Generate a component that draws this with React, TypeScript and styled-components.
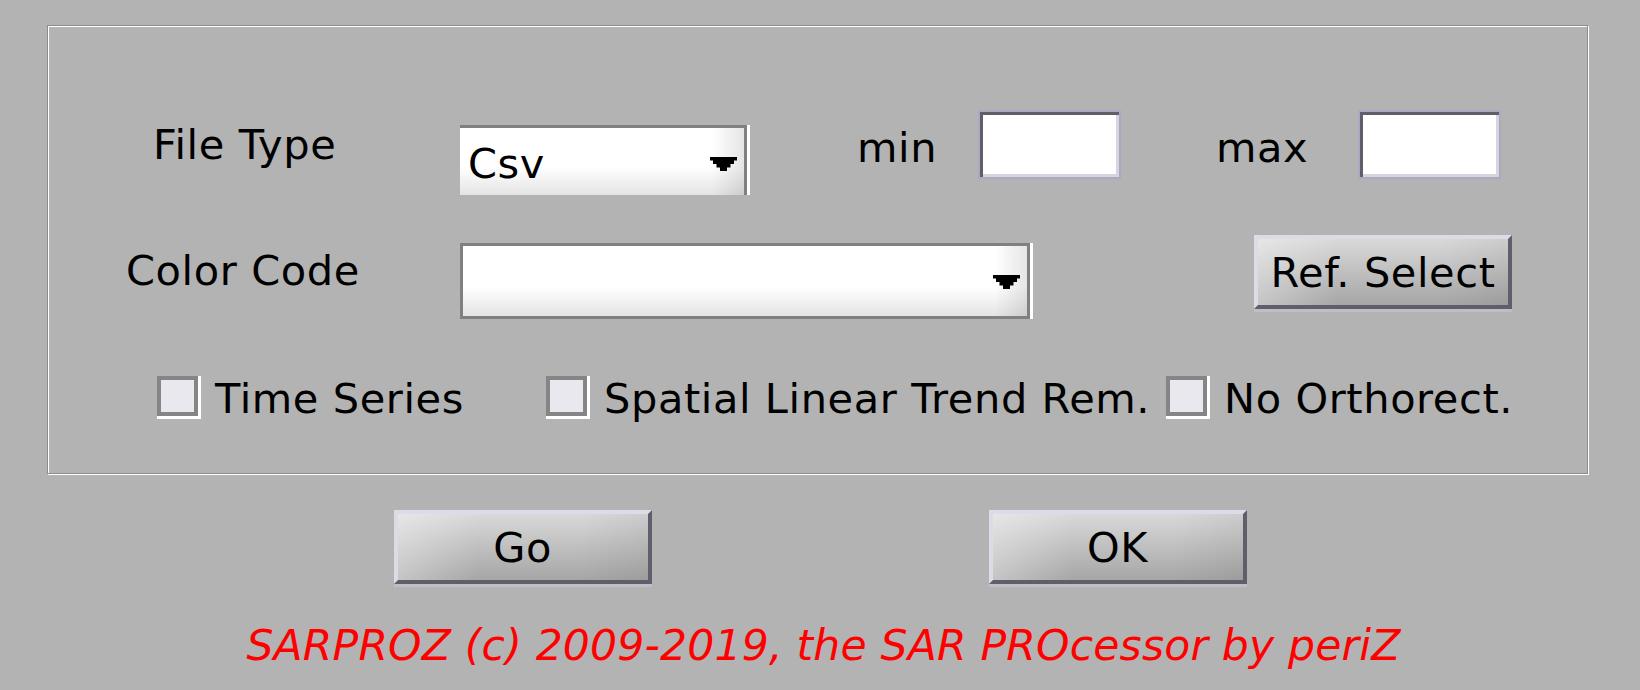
import React from 'react'
import styled, { createGlobalStyle } from 'styled-components'

const GlobalStyle = createGlobalStyle`
  html, body {
    margin: 0;
    padding: 0;
    background: #b3b3b3;
  }
  body {
    font-family: "DejaVu Sans", "Liberation Sans", sans-serif;
    color: #000;
  }
`

const Dialog = styled.div`
  width: 1640px;
  height: 690px;
  padding-top: 25px;
  box-sizing: border-box;
  display: flex;
  flex-direction: column;
  font-size: 41.5px;
  line-height: 1;
  letter-spacing: 0.6px;
`

const Panel = styled.div`
  box-sizing: border-box;
  margin-left: 47px;
  width: 1541px;
  height: 449px;
  padding-top: 84px;
  border: 1px solid #8c8c8c;
  box-shadow: inset 1px 1px 0 #fff, 1px 1px 0 #fff;
  display: flex;
  flex-direction: column;
`

const Row = styled.div<{ $indent: number; $height?: number; $gap?: number }>`
  display: flex;
  align-items: flex-start;
  padding-left: ${(p) => p.$indent}px;
  height: ${(p) => (p.$height ? `${p.$height}px` : 'auto')};
  margin-top: ${(p) => p.$gap ?? 0}px;
`

const Label = styled.div<{ $width: number; $top: number; $left?: number }>`
  flex: none;
  width: ${(p) => p.$width}px;
  margin-top: ${(p) => p.$top}px;
  margin-left: ${(p) => p.$left ?? 0}px;
  white-space: nowrap;
`

const Combo = styled.div<{ $width: number; $height: number; $top: number; $boxed?: boolean }>`
  flex: none;
  box-sizing: border-box;
  display: flex;
  align-items: flex-start;
  width: ${(p) => p.$width}px;
  height: ${(p) => p.$height}px;
  margin-top: ${(p) => p.$top}px;
  padding-left: 8px;
  border-top: 3px solid #808080;
  border-right: 3px solid #808080;
  ${(p) => p.$boxed && 'border-left: 3px solid #808080; border-bottom: 3px solid #808080;'}
  box-shadow: 3px 0 0 #fff;
  background:
    linear-gradient(to right, rgba(0, 0, 0, 0) calc(100% - 32px), rgba(0, 0, 0, 0.1)),
    linear-gradient(to bottom, #fff 58%, #e4e4e4);
`

const ComboValue = styled.span`
  margin-top: 15px;
  white-space: nowrap;
`

const Arrow = styled.svg`
  flex: none;
  margin-left: auto;
  margin-right: 7px;
  margin-top: 29px;
`

const Field = styled.div`
  flex: none;
  box-sizing: border-box;
  width: 143px;
  height: 69px;
  border: 2px solid #a9a9bf;
  background: #fff;
  box-shadow: inset 3px 3px 0 #5f5f69, inset -3px -3px 0 #d5d5df;
`

const Button = styled.div<{ $width: number; $left?: number }>`
  flex: none;
  box-sizing: border-box;
  width: ${(p) => p.$width}px;
  height: 74px;
  margin-left: ${(p) => p.$left ?? 0}px;
  padding-top: 2px;
  border: 4px solid;
  border-color: #dcdce6 #5f5f6b #5f5f6b #dcdce6;
  box-shadow: 0 3px 0 #bebec4;
  background:
    linear-gradient(to right, rgba(255, 255, 255, 0.35), rgba(255, 255, 255, 0) 80px),
    linear-gradient(to left, rgba(0, 0, 0, 0.06), rgba(0, 0, 0, 0) 70px),
    linear-gradient(to bottom, #d9d9d9, #a6a6a6);
  display: flex;
  align-items: center;
  justify-content: center;
  white-space: nowrap;
`

const CheckItem = styled.div<{ $width?: number }>`
  flex: none;
  display: flex;
  align-items: flex-start;
  width: ${(p) => (p.$width ? `${p.$width}px` : 'auto')};
`

const Check = styled.span`
  flex: none;
  box-sizing: border-box;
  width: 41px;
  height: 40px;
  border: 4px solid #858585;
  background: #e9e8ee;
  box-shadow: 3px 0 0 #fff, 0 3px 0 #fff, 3px 3px 0 #fff;
`

const CheckText = styled.span`
  margin-left: 17px;
  margin-top: 2px;
  white-space: nowrap;
`

const ButtonRow = styled.div`
  display: flex;
  justify-content: center;
  gap: 337px;
  margin-top: 36px;
`

const Footer = styled.div`
  margin-top: 41px;
  padding-left: 7px;
  text-align: center;
  font-size: 42.5px;
  letter-spacing: 0.2px;
  font-style: italic;
  color: #ff0000;
  white-space: nowrap;
`

const DropArrow = () => (
  <Arrow width="27" height="14" viewBox="0 0 27 14">
    <path d="M0 0H27V3.5H24V7H20.5V10.5H17V14H10V10.5H6.5V7H3V3.5H0Z" fill="#000" />
  </Arrow>
)

const App = () => {
  return (
    <Dialog>
      <GlobalStyle />
      <Panel>
        <Row $indent={105} $height={85}>
          <Label $width={307} $top={14}>File Type</Label>
          <Combo $width={287} $height={70} $top={15}>
            <ComboValue>Csv</ComboValue>
            <DropArrow />
          </Combo>
          <Label $width={121} $top={17} $left={110}>min</Label>
          <Field />
          <Label $width={142} $top={17} $left={95}>max</Label>
          <Field />
        </Row>

        <Row $indent={78} $height={84} $gap={40}>
          <Label $width={334} $top={14.5}>Color Code</Label>
          <Combo $width={570} $height={76} $top={8} $boxed>
            <DropArrow />
          </Combo>
          <Button $width={258} $left={224}>Ref. Select</Button>
        </Row>

        <Row $indent={109} $gap={57}>
          <CheckItem $width={389}>
            <Check />
            <CheckText>Time Series</CheckText>
          </CheckItem>
          <CheckItem $width={620}>
            <Check />
            <CheckText>Spatial Linear Trend Rem.</CheckText>
          </CheckItem>
          <CheckItem>
            <Check />
            <CheckText>No Orthorect.</CheckText>
          </CheckItem>
        </Row>
      </Panel>

      <ButtonRow>
        <Button $width={258}>Go</Button>
        <Button $width={258}>OK</Button>
      </ButtonRow>

      <Footer>SARPROZ (c) 2009-2019, the SAR PROcessor by periZ</Footer>
    </Dialog>
  )
}

export default App
